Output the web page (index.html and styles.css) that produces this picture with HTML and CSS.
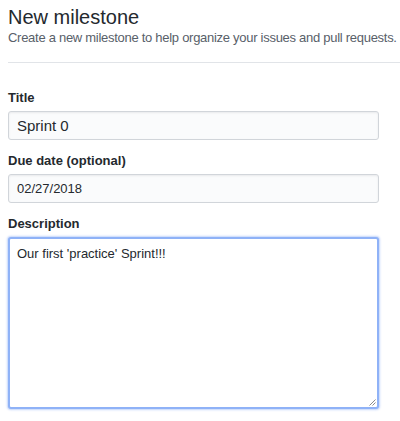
FILE: index.html
```html
<!DOCTYPE html>
<html>
<head>
<meta charset="utf-8">
<link rel="stylesheet" href="styles.css">
</head>
<body>
<div class="page">
  <div class="subhead">
    <h1 class="subhead-heading">New milestone</h1>
    <p class="subhead-desc">Create a new milestone to help organize your issues and pull requests.</p>
  </div>
  <form class="form">
    <div class="field">
      <label class="label">Title</label>
      <div class="input input-lg">Sprint 0</div>
    </div>
    <div class="field">
      <label class="label">Due date (optional)</label>
      <div class="input">02/27/2018</div>
    </div>
    <div class="field">
      <label class="label">Description</label>
      <div class="textarea">Our first 'practice' Sprint!!!
        <svg class="grip" width="8" height="8" viewBox="0 0 8 8"><path d="M7.5 1.5L1.5 7.5M7.5 4.5L4.5 7.5" stroke="#8a8a8a" stroke-width="1" fill="none"/></svg>
      </div>
    </div>
  </form>
</div>
</body>
</html>
```
FILE: styles.css
```css
* { box-sizing: border-box; }
html, body { margin: 0; padding: 0; background: #fff; }
body {
  font-family: "Liberation Sans", Arial, sans-serif;
  color: #24292e;
  overflow: hidden;
}
.page { padding: 0 0 0 8px; }
.subhead {
  border-bottom: 1px solid #e1e4e8;
  padding-top: 5px;
  padding-bottom: 15px;
}
.subhead-heading {
  margin: 0;
  font-size: 20px;
  font-weight: 400;
  line-height: 24px;
}
.subhead-desc {
  margin: 0;
  font-size: 13px;
  line-height: 18px;
  letter-spacing: -0.28px;
  white-space: nowrap;
  color: #586069;
}
.form { margin: 0; padding-top: 26px; width: 371px; }
.field { margin-bottom: 12px; }
.label {
  display: block;
  font-size: 13px;
  font-weight: 700;
  line-height: 18px;
  margin-bottom: 4px;
}
.input {
  height: 29px;
  background: #fafbfc;
  border: 1px solid #d1d5da;
  border-radius: 3px;
  box-shadow: inset 0 1px 2px rgba(27,31,35,.075);
  padding: 0 8px;
  font-size: 13px;
  line-height: 27px;
}
.input-lg { font-size: 15px; }
.textarea {
  position: relative;
  height: 172px;
  background: #fff;
  border: 2px solid #8fb2f7;
  border-radius: 3px;
  box-shadow: 0 0 2px 1px rgba(120,160,245,.45);
  padding: 6px 7px;
  font-size: 13px;
  line-height: 18px;
}
.grip { position: absolute; right: 1px; bottom: 1px; }
```
